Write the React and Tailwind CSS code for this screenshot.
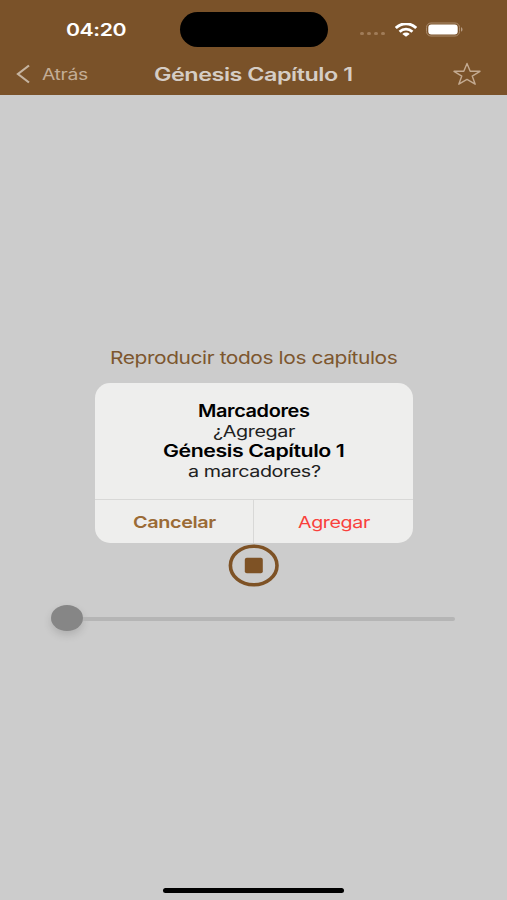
import React, { useLayoutEffect, useRef, useState } from "react";

// Single line of text stretched horizontally to fill a given width.
function FitText({ width, className = "" , children }) {
  const ref = useRef(null);
  const [scale, setScale] = useState(1.2);
  useLayoutEffect(() => {
    setScale(width / ref.current.offsetWidth);
  }, [width]);
  return (
    <div className={"shrink-0 whitespace-nowrap tracking-[-0.02em] " + className} style={{ width }}>
      <span ref={ref} className="inline-block origin-left" style={{ transform: `scaleX(${scale})` }}>
        {children}
      </span>
    </div>
  );
}

function StatusBar() {
  return (
    <div className="flex h-[59px] items-center">
      <FitText width={59.5} className="ml-[66px] text-[17.5px] leading-[59px] font-semibold text-white">04:20</FitText>
      <div className="ml-[54.5px] h-[35px] w-[148px] rounded-full bg-black" />
      <div className="ml-8 mt-[8px] flex gap-[3px]">
        {[0, 1, 2, 3].map((i) => (
          <span key={i} className="h-[3.5px] w-1 rounded-full bg-[#a07c58]" />
        ))}
      </div>
      <svg className="ml-[10px] h-[14px] w-[22px]" viewBox="0 0 22 14" fill="none" stroke="#fff" strokeWidth="2.9">
        <path d="M.8 5C6.500-.6 15.500-.6 21.200 5" />
        <path d="M4.600 8.700C8.300 5.300 13.700 5.300 17.400 8.700" />
        <path d="M11 13.800L7.300 10.900C9.500 9 12.500 9 14.700 10.900Z" fill="#fff" stroke="none" />
      </svg>
      <svg className="ml-[9px] h-[15px] w-[37px]" viewBox="0 0 37 15">
        <rect x=".5" y="1" width="33" height="13" rx="4.500" fill="none" stroke="#aa8b6c" />
        <rect x="2.300" y="2.500" width="29.400" height="10" rx="3" fill="#fff" />
        <path d="M35 5.300C37 6 37 9 35 9.700Z" fill="#b79c82" />
      </svg>
    </div>
  );
}

function NavBar() {
  return (
    <div className="flex h-[30px] items-center">
      <svg className="ml-4 h-5 w-[14px]" viewBox="0 0 14 20" fill="none" stroke="#c6b4a0" strokeWidth="2.200">
        <path d="M13 1.500L2 10L13 18.500" />
      </svg>
      <FitText width={46} className="ml-[11.500px] text-[16px] leading-[30px] text-[#c3ad96]">Atrás</FitText>
      <FitText width={198.500} className="ml-[66.500px] text-[18px] leading-[31px] font-semibold text-[#d5cdc5]">Génesis Capítulo 1</FitText>
      <svg className="ml-[99.500px] h-6 w-[30px]" viewBox="0 0 30 24" fill="none" stroke="#c3aa91" strokeWidth="1.400" strokeLinejoin="round">
        <path d="M15 1.500L18.200 9.200L28 9.300L20.200 14.100L23.200 22.200L15 17.400L6.800 22.200L9.800 14.100L2 9.300L11.800 9.200Z" />
      </svg>
    </div>
  );
}

function Alert() {
  return (
    <div className="absolute left-[95px] top-[383px] flex h-[160px] w-[318px] flex-col overflow-hidden rounded-[15px] bg-[#eeeeed] text-black">
      <div className="flex h-[116px] shrink-0 flex-col items-center pt-[18px]">
        <FitText width={111.500} className="text-[17px] leading-[21px] font-semibold">Marcadores</FitText>
        <FitText width={81.500} className="text-[16px] leading-[19px] text-[#202020]">¿Agregar</FitText>
        <FitText width={182} className="text-[17px] leading-[21px] font-semibold">Génesis Capítulo 1</FitText>
        <FitText width={132} className="text-[16px] leading-[19px] text-[#202020]">a marcadores?</FitText>
      </div>
      <div className="flex h-11 border-t border-[#d8d8d7]">
        <div className="flex w-[159px] justify-center border-r border-[#d8d8d7]">
          <FitText width={83} className="text-[16.500px] leading-[45px] font-semibold text-[#9b6b36]">Cancelar</FitText>
        </div>
        <div className="flex w-[159px] justify-center">
          <FitText width={71.500} className="text-[16.500px] leading-[45px] text-[#f9403b]">Agregar</FitText>
        </div>
      </div>
    </div>
  );
}

export default function App() {
  return (
    <div className="relative flex h-[900px] w-[507px] flex-col overflow-hidden bg-[#cccccc] font-['Inter','Liberation_Sans',sans-serif]">
      <header className="h-[95px] shrink-0 bg-[#7a5229]">
        <StatusBar />
        <NavBar />
      </header>
      <main className="flex grow flex-col items-center">
        <FitText width={287} className="mt-[248px] text-[17.500px] leading-[30px] text-[#7d572f]">Reproducir todos los capítulos</FitText>
        <svg className="mt-[170.500px] h-[43px] w-[51px]" viewBox="0 0 51 43">
          <ellipse cx="25.700" cy="21.500" rx="23.300" ry="19.300" fill="none" stroke="#7e5225" strokeWidth="3.600" />
          <rect x="16.800" y="13.800" width="18" height="15.500" rx="2" fill="#7e5225" />
        </svg>
        <div className="mt-[18px] mr-px flex w-[404px] items-center">
          <div className="h-[26px] w-8 rounded-[50%] bg-[#868686] shadow-[0_4px_8px_rgba(0,0,0,0.14)]" />
          <div className="mt-[2px] h-1 grow rounded-r-full bg-[#b5b5b5]" />
        </div>
        <div className="mt-auto mb-[7.500px] h-[5px] w-[181px] rounded-full bg-black" />
      </main>
      <Alert />
    </div>
  );
}
